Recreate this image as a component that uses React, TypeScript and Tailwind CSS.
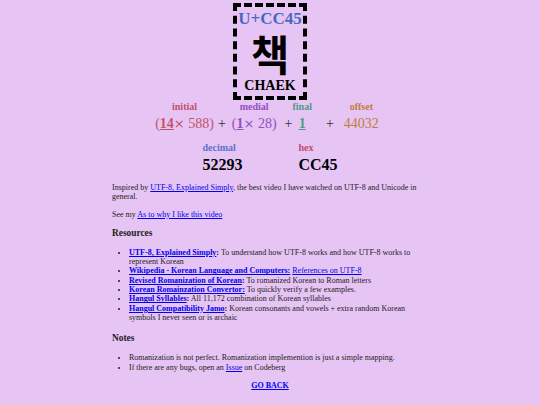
const serif = { fontFamily: '"Liberation Serif", "Times New Roman", serif' };

function Link({ children, bold = false }: { children: React.ReactNode; bold?: boolean }) {
    return (
        <a href="#" className={`text-[#0000ee] underline ${bold ? 'font-bold' : ''}`}>
            {children}
        </a>
    );
}

function Term({ label, labelColor, children }: { label: string; labelColor: string; children: React.ReactNode }) {
    return (
        <div className="flex flex-col items-center">
            <span className={`text-[10px] font-bold leading-[12px] ${labelColor}`}>{label}</span>
            <span className="mt-[3px] text-[14px] leading-[16px]">{children}</span>
        </div>
    );
}

const Plus = ({ className = '' }: { className?: string }) => (
    <span className={`self-end text-[14px] leading-[16px] text-[#333] ${className}`}>+</span>
);

const Times = () => (
    <span style={{ fontFamily: '"DejaVu Sans", sans-serif' }} className="text-[13px]">
        ×
    </span>
);

const RESOURCES = [
    { name: 'UTF-8, Explained Simply', colonInLink: false, text: 'To understand how UTF-8 works and how UTF-8 works to represent Korean' },
    { name: 'Wikipedia - Korean Language and Computers', colonInLink: true, link: 'References on UTF-8' },
    { name: 'Revised Romanization of Korean', colonInLink: false, text: 'To romanized Korean to Roman letters' },
    { name: 'Korean Romainzation Convertor', colonInLink: true, text: 'To quickly verify a few examples.' },
    { name: 'Hangul Syllables', colonInLink: false, text: 'All 11,172 combination of Korean syllables' },
    { name: 'Hangul Compatibility Jamo', colonInLink: false, text: 'Korean consonants and vowels + extra random Korean symbols I never seen or is archaic' },
];

export default function App() {
    return (
        <div className="min-h-[405px] bg-[#e6c5f4] pb-4 text-[#1c1c1c]" style={serif}>
            {/* Character card */}
            <div className="flex justify-center pt-[3px]">
                <div className="flex w-[74px] flex-col items-center border-4 border-dashed border-black pb-[2px]">
                    <span className="mt-[2px] text-[17px] font-bold leading-[20px] text-[#4a68c2]">U+CC45</span>
                    <span className="text-[42px] font-bold leading-[48px] text-black" style={{ fontFamily: '"Noto Sans CJK KR", sans-serif' }}>책</span>
                    <span className="mt-[1px] text-[14px] font-bold leading-[16px] text-black">CHAEK</span>
                </div>
            </div>

            {/* Formula */}
            <div className="mt-[1px] flex items-end justify-center pr-[6px]">
                <Term label="initial" labelColor="text-[#c4506c]">
                    <span className="text-[#c4506c]">
                        (<span className="font-bold underline">14</span><Times /> 588)
                    </span>
                </Term>
                <Plus className="ml-[4px] mr-[6px]" />
                <Term label="medial" labelColor="text-[#9150c0]">
                    <span className="text-[#9150c0]">
                        (<span className="font-bold underline">1</span><Times /> 28)
                    </span>
                </Term>
                <Plus className="ml-[8px] mr-[0px]" />
                <Term label="final" labelColor="text-[#4f9a80]">
                    <span className="font-bold text-[#4f9a80] underline">1</span>
                </Term>
                <Plus className="ml-[14px] mr-[10px]" />
                <Term label="offset" labelColor="text-[#c47a3c]">
                    <span className="text-[#c47a3c]">44032</span>
                </Term>
            </div>

            {/* Decimal / hex */}
            <div className="mt-[10px] flex justify-center gap-[56px]">
                <div className="flex flex-col items-start">
                    <span className="text-[10px] font-bold leading-[12px] text-[#5b73c8]">decimal</span>
                    <span className="mt-[2px] text-[16px] font-bold leading-[18px] text-black">52293</span>
                </div>
                <div className="flex flex-col items-start">
                    <span className="text-[10px] font-bold leading-[12px] text-[#c84a6a]">hex</span>
                    <span className="mt-[2px] text-[16px] font-bold leading-[18px] text-black">CC45</span>
                </div>
            </div>

            {/* Body */}
            <div className="mx-auto mt-[9px] w-[316px] text-[8px] leading-[9.3px]">
                <p>
                    Inspired by <Link>UTF-8, Explained Simply</Link>, the best video I have watched on UTF-8 and Unicode in general.
                </p>
                <p className="mt-[8px]">
                    See my <Link>As to why I like this video</Link>
                </p>

                <h3 className="mt-[9px] text-[9.36px] font-bold leading-[11px]">Resources</h3>
                <ul className="mt-[9px] list-disc pl-[17px]">
                    {RESOURCES.map((r) => (
                        <li key={r.name}>
                            <strong>
                                <Link bold>{r.colonInLink ? `${r.name}:` : r.name}</Link>
                                {!r.colonInLink && ':'}
                            </strong>{' '}
                            {r.link ? <Link>{r.link}</Link> : r.text}
                        </li>
                    ))}
                </ul>

                <h3 className="mt-[11px] text-[9.36px] font-bold leading-[11px]">Notes</h3>
                <ul className="mt-[9px] list-disc pl-[17px]">
                    <li>Romanization is not perfect. Romanization implemention is just a simple mapping.</li>
                    <li>
                        If there are any bugs, open an <Link>Issue</Link> on Codeberg
                    </li>
                </ul>

                <p className="mt-[9px] text-center">
                    <Link bold>GO BACK</Link>
                </p>
            </div>
        </div>
    );
}
